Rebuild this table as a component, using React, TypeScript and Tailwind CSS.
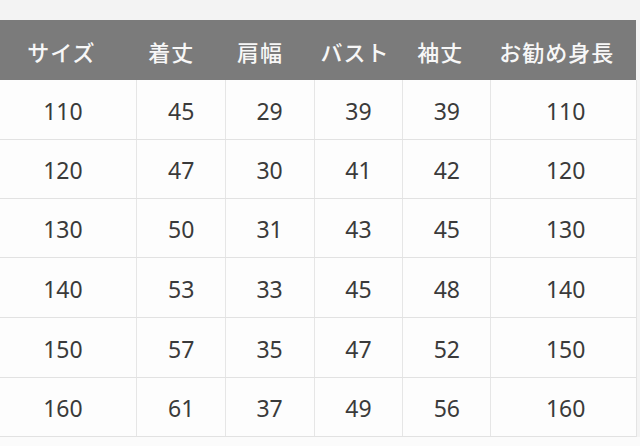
const FONT = "font-['Noto_Sans_CJK_JP','Noto_Sans',sans-serif]";

// ─── Data ─────────────────────────────────────────────────────────────────────

const headers = ["サイズ", "着丈", "肩幅", "バスト", "袖丈", "お勧め身長"];

const rows: number[][] = [
  [110, 45, 29, 39, 39, 110],
  [120, 47, 30, 41, 42, 120],
  [130, 50, 31, 43, 45, 130],
  [140, 53, 33, 45, 48, 140],
  [150, 57, 35, 47, 52, 150],
  [160, 61, 37, 49, 56, 160],
];

// column widths + small nudges so text sits where the chart has it
const widths = ["w-[137px]", "w-[89px]", "w-[89px]", "w-[89px]", "w-[88px]", "w-[145px]"];
const headPad = ["pr-[14px]", "pr-[20px]", "pr-[20px]", "pr-[8px]", "pr-[14px]", "pr-[14px]"];
const bodyPad = ["pr-[10px]", "pl-px", "", "", "", "pl-[4px]"];
const rowHeights = ["h-[60px]", "h-[59px]", "h-[59px]", "h-[60px]", "h-[60px]", "h-[59px]"];

export default function App() {
  return (
    <div className={`w-[640px] h-[446px] overflow-hidden bg-[#f4f4f4] ${FONT}`}>
      <div className="h-[20px] bg-[#f3f3f3]" />

      {/* header */}
      <div className="flex h-[60px]">
        <div className="flex w-[636px] bg-[#7b7b7b] text-[#f7f7f7]">
          {headers.map((h, i) => (
            <div
              key={h}
              className={`${widths[i]} ${headPad[i]} flex items-center justify-center text-[22px] font-medium tracking-[1px] pt-[2px]`}
            >
              {h}
            </div>
          ))}
        </div>
      </div>

      {/* body */}
      <div className="flex">
        <div className="w-[637px] bg-[#fdfdfd] border-r border-[#e4e4e4]">
          {rows.map((r, ri) => (
            <div key={ri} className={`flex ${rowHeights[ri]} border-b border-[#e2e2e2]`}>
              {r.map((v, ci) => (
                <div
                  key={ci}
                  className={`${widths[ci]} ${bodyPad[ci]} flex items-center justify-center pt-[3px] font-['Noto_Sans',sans-serif] text-[23px] text-[#3a3a3a] ${
                    ci < 5 ? "border-r border-[#e6e6e6]" : ""
                  }`}
                >
                  {v}
                </div>
              ))}
            </div>
          ))}
        </div>
      </div>
      <div className="h-[9px] bg-[#fbfbfb]" />
    </div>
  );
}
